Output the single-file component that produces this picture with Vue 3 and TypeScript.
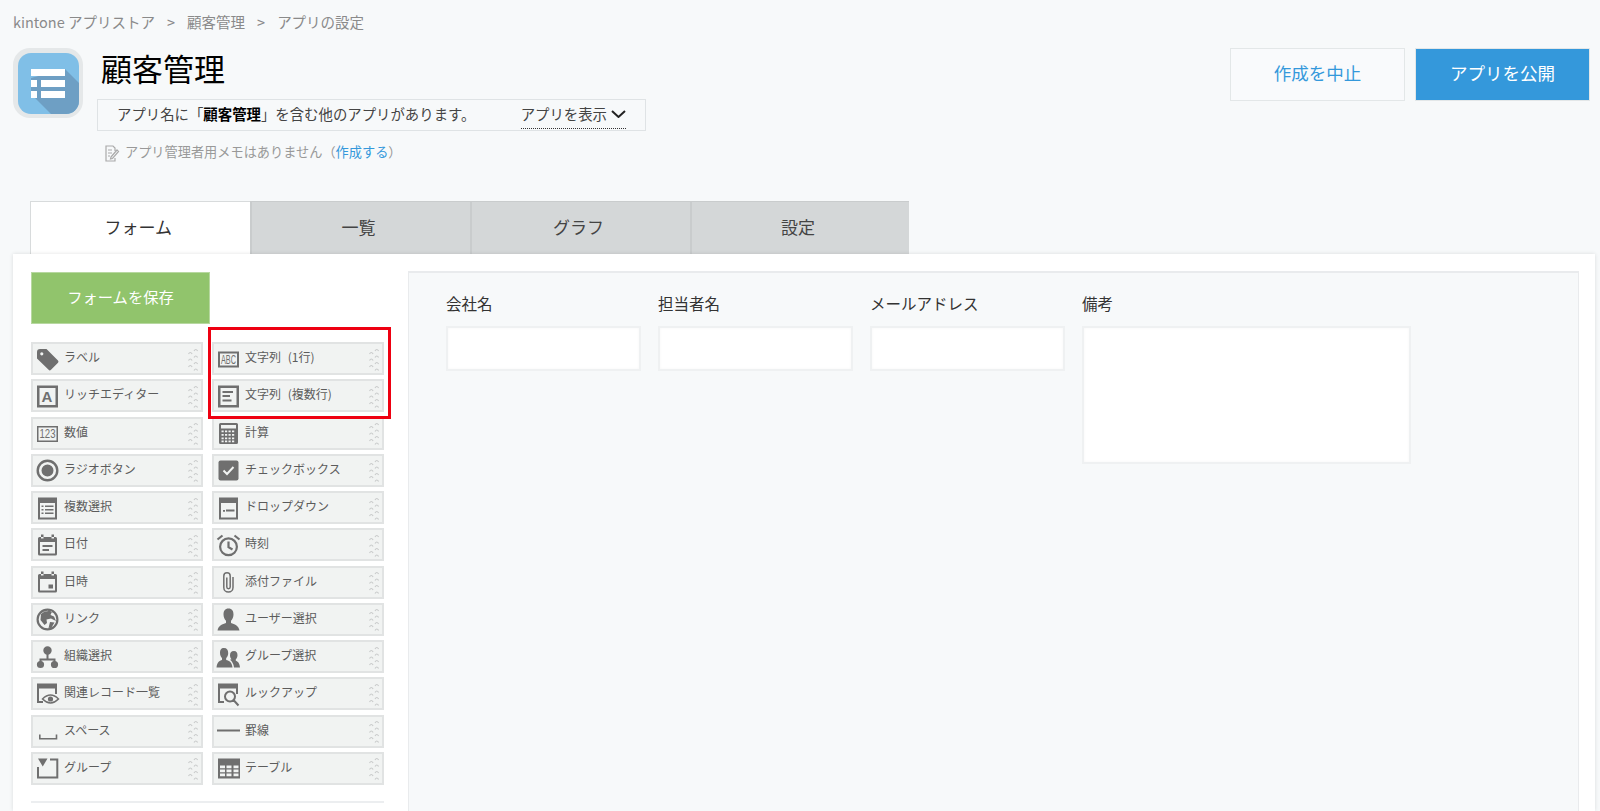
<script setup lang="ts">
interface Icon {
  fill?: string
  stroke?: string
  sw?: number
  light?: string
  text?: string
  tx?: number
  ty?: number
  ts?: number
  tl?: number
  bold?: boolean
}
interface Item {
  label: string
  icon: Icon
}

const circle = (cx: number, cy: number, r: number): string =>
  `M${cx - r} ${cy}a${r} ${r} 0 1 0 ${2 * r} 0a${r} ${r} 0 1 0 ${-2 * r} 0z`
const rect = (x: number, y: number, w: number, h: number): string => `M${x} ${y}h${w}v${h}h${-w}z`

const calendar = rect(6, 1.5, 2.5, 4) + rect(16.5, 1.5, 2.5, 4) + 'M4.5 4H20.5Q22 4 22 5.5V21Q22 22.5 20.5 22.5H4.5Q3 22.5 3 21V5.5Q3 4 4.5 4z' + rect(5, 9, 15, 11.5)

const windowFrame = 'M2 1.5H22V12H20V6.5H4V19H8V21H2z'

const items: Item[] = [
  { label: 'ラベル', icon: { fill: 'M5 2H11.5L23 13.5Q24 14.7 23 15.8L16 22.8Q14.8 24 13.6 22.8L2 11.5V5Q2 2 5 2z' + circle(6.8, 6.8, 1.6) } },
  { label: '文字列 (1行)', icon: { fill: rect(2, 4.5, 21, 16) + rect(4, 6.5, 17, 12), text: 'ABC', tx: 12.5, ty: 17, ts: 12, tl: 15, bold: false } },
  { label: 'リッチエディター', icon: { fill: rect(2, 1.5, 21, 22) + rect(4.5, 4, 16, 17), text: 'A', tx: 12, ty: 18, ts: 15, bold: true } },
  { label: '文字列 (複数行)', icon: { fill: rect(2, 1.5, 21, 22) + rect(4.5, 4, 16, 17) + rect(6.5, 7, 10.5, 2) + rect(6.5, 11, 7.5, 2) + rect(6.5, 15.5, 9, 2) } },
  { label: '数値', icon: { fill: rect(2, 5, 21, 16) + rect(3.5, 6.5, 18, 13), text: '123', tx: 12.5, ty: 17.4, ts: 12, tl: 16 } },
  { label: '計算', icon: { fill: 'M4.5 2H20.5Q22 2 22 3.5V21.5Q22 23 20.5 23H4.5Q3 23 3 21.5V3.5Q3 2 4.5 2z' + rect(5, 4, 15, 3.5) + [9.5, 13, 16.5, 19.5].flatMap(y => [5.5, 9, 12.5, 16].map(x => rect(x, y, 2.2, 1.8))).join('') } },
  { label: 'ラジオボタン', icon: { fill: circle(12.5, 12.5, 11) + circle(12.5, 12.5, 8.6) + circle(12.5, 12.5, 6) } },
  { label: 'チェックボックス', icon: { fill: 'M4.5 2.5H20.5Q22.5 2.5 22.5 4.5V20.5Q22.5 22.5 20.5 22.5H4.5Q2.5 22.5 2.5 20.5V4.5Q2.5 2.5 4.5 2.5z', light: 'M7.5 12.5l3.5 3.5 6.5-7' } },
  { label: '複数選択', icon: { fill: rect(3, 1.5, 19, 22) + rect(5, 7, 15, 14.5) + rect(6.5, 9.5, 2, 1.5) + rect(10, 9.5, 8.5, 1.5) + rect(6.5, 13, 2, 1.5) + rect(10, 13, 8.5, 1.5) + rect(6.5, 16.5, 2, 1.5) + rect(10, 16.5, 8.5, 1.5) } },
  { label: 'ドロップダウン', icon: { fill: rect(3, 1.5, 19, 22) + rect(5, 7, 15, 14.5) + rect(7, 14, 2, 1.8) + rect(10, 13.5, 8.5, 2) } },
  { label: '日付', icon: { fill: calendar + rect(7.5, 12, 10, 2) + rect(7.5, 16, 6.5, 2) } },
  { label: '時刻', icon: { fill: circle(12.5, 13.8, 9.5) + circle(12.5, 13.8, 7.3), stroke: 'M12.5 8.5V14.2L16.5 16.5M1.5 6.5L6.5 2.5M18.5 2.5L23.5 6.5', sw: 2.2 } },
  { label: '日時', icon: { fill: calendar + rect(13.5, 14.5, 4.5, 4) } },
  { label: '添付ファイル', icon: { stroke: 'M17 7V17.5a4.6 4.6 0 0 1-9.2 0V6a3.2 3.2 0 0 1 6.4 0V17a1.7 1.7 0 0 1-3.4 0V7.5', sw: 1.5 } },
  { label: 'リンク', icon: { fill: circle(12.5, 12.5, 11) + circle(12.5, 12.5, 8.8) + 'M6 7Q10 3 17 4.500L15.500 8L19 9.500L21 14L16 11.500L11.500 12.500L12 16L9.500 18L5.500 13zM15 15L19.500 15.500L16.500 20.500L13.500 21z' } },
  { label: 'ユーザー選択', icon: { fill: 'M12.5 1.500c3.500 0 5 2.500 5 6 0 3-1.300 5-2.500 6.300v2.200c3.500 1 7.500 2.500 8.500 7.500H1.500c1-5 5-6.500 8.500-7.500v-2.200C8.800 12.500 7.500 10.500 7.500 7.500c0-3.500 1.500-6 5-6z' } },
  { label: '組織選択', icon: { fill: circle(12.5, 5.5, 4.2) + circle(5.5, 19.5, 3.6) + circle(19.5, 19.5, 3.6), stroke: 'M12.5 9V14.500M5.500 18V14.500H19.500V18', sw: 2 } },
  { label: 'グループ選択', icon: { fill: 'M8 3c3 0 4.200 2 4.200 5 0 2.400-1 4-2 5v2c3 .8 5.800 2.300 6.300 7.500H.5C1 17.300 3.500 15.800 6 15v-2c-1-1-2-2.600-2-5 0-3 1-5 4-5zM18 6c2.500 0 3.500 1.800 3.500 4.200 0 2-1 3.300-1.700 4.100v1.500c2 .6 3.700 2 4.200 6.700H18c-.3-3.500-2-6.300-4-7.800.5-.2 1-.3 1.500-.4v-.1c-.7-.8-1.500-2-1.500-4 0-2.400 1-4.200 4-4.200z' } },
  { label: '関連レコード一覧', icon: { fill: windowFrame + circle(15.5, 17, 2.6), stroke: 'M7.500 17Q15.500 9 23.500 17Q15.500 25 7.500 17z', sw: 1.5 } },
  { label: 'ルックアップ', icon: { fill: windowFrame, stroke: circle(14, 14.5, 5) + 'M17.500 18L22.500 23.500', sw: 2 } },
  { label: 'スペース', icon: { stroke: 'M4.800 15.500V19.800H21.500V15.500', sw: 1.6 } },
  { label: '罫線', icon: { stroke: 'M1 11.500H24', sw: 2 } },
  { label: 'グループ', icon: { fill: 'M3 2.500H12.500L7.750 10.500z', stroke: 'M15 3.500H22.300V21.500H3V11', sw: 2 } },
  { label: 'テーブル', icon: { fill: rect(2, 2.5, 22, 20) + [9.5, 13.5, 17.5].flatMap(y => [4, 10.5, 17.5].map(x => rect(x, y, 5, 2.8))).join('') } },
]

const gripPath = [
  ...[0, 1, 2].map(r => `M0.500 ${7 + r * 6.5}q1.800-3 3.600 0`),
  ...[0, 1, 2, 3].map(r => `M6 ${4 + r * 6.5}q1.800-3 3.600 0`),
].join('')

const tabs = ['フォーム', '一覧', 'グラフ', '設定']
const fields = [
  { label: '会社名', wide: false },
  { label: '担当者名', wide: false },
  { label: 'メールアドレス', wide: false },
  { label: '備考', wide: true },
]
</script>

<template>
  <div class="page">
    <nav class="crumbs">
      <span>kintone アプリストア</span><span class="sep">&gt;</span><span>顧客管理</span><span class="sep">&gt;</span><span>アプリの設定</span>
    </nav>

    <header class="header">
      <svg class="app-icon" viewBox="0 0 70 70" width="70" height="70">
        <defs>
          <clipPath id="inner"><rect x="5" y="5" width="61" height="61" rx="13" /></clipPath>
        </defs>
        <rect width="70" height="70" rx="17" fill="#e5e8e9" />
        <rect x="5" y="5" width="61" height="61" rx="13" fill="#80bfe7" />
        <path d="M52 21L70 39V70H42L18 46V30z" fill="#6e9fc4" clip-path="url(#inner)" />
        <path d="M18 21h34v7H18zM18 32h6v7h-6zM28 32h24v7H28zM18 43h6v7h-6zM28 43h24v7H28z" fill="#fff" />
      </svg>

      <div class="info">
        <h1 class="title">顧客管理</h1>
        <div class="notice">
          <span class="notice-text">アプリ名に「<b>顧客管理</b>」を含む他のアプリがあります。</span>
          <span class="show">アプリを表示
            <svg width="15" height="8" viewBox="0 0 15 8"><path d="M1 1l6.500 6L14 1" fill="none" stroke="#222" stroke-width="2" /></svg>
          </span>
        </div>
        <div class="memo">
          <svg width="15" height="17" viewBox="0 0 15 17" fill="none" stroke="#aaa" stroke-width="1.200">
            <path d="M10 6V3L8 1H1V16H10V13M3 5h4M3 8h4M3 11h2M6 12l6-7 1.500 1.500-6 7-2 .5z" />
          </svg>
          <span class="memo-text">アプリ管理者用メモはありません（<a class="link">作成する</a>）</span>
        </div>
      </div>

      <div class="actions">
        <button class="btn cancel">作成を中止</button>
        <button class="btn publish">アプリを公開</button>
      </div>
    </header>

    <div class="tabs">
      <div v-for="(tab, i) in tabs" :key="tab" class="tab" :class="{ active: i === 0 }">{{ tab }}</div>
    </div>

    <main class="panel">
      <aside class="side">
        <button class="save">フォームを保存</button>
        <div class="palette">
          <div v-for="item in items" :key="item.label" class="item">
            <svg class="icon" viewBox="0 0 24 24" width="24" height="24">
              <path v-if="item.icon.fill" :d="item.icon.fill" fill="#6f6f6f" fill-rule="evenodd" />
              <path v-if="item.icon.stroke" :d="item.icon.stroke" fill="none" stroke="#6f6f6f" :stroke-width="item.icon.sw" />
              <path v-if="item.icon.light" :d="item.icon.light" fill="none" stroke="#f1f3f2" :stroke-width="item.icon.sw ?? 2" />
              <text
                v-if="item.icon.text"
                class="icon-text"
                :x="item.icon.tx"
                :y="item.icon.ty"
                :font-size="item.icon.ts"
                :font-weight="item.icon.bold ? 700 : 400"
                :textLength="item.icon.tl"
                lengthAdjust="spacingAndGlyphs"
                text-anchor="middle"
              >{{ item.icon.text }}</text>
            </svg>
            <span class="item-label">{{ item.label }}</span>
            <svg class="grip" viewBox="0 0 10 24" width="10" height="24">
              <path :d="gripPath" fill="none" stroke="#c9cbcb" stroke-width="1.2" />
            </svg>
          </div>
          <div class="highlight"></div>
        </div>
        <hr class="rule" />
      </aside>

      <section class="form">
        <div v-for="f in fields" :key="f.label" class="field" :class="{ wide: f.wide }">
          <label class="field-label">{{ f.label }}</label>
          <div class="control"></div>
        </div>
      </section>
    </main>
  </div>
</template>

<style>
html, body { margin: 0; background: #f7f9fa; }
</style>

<style scoped>
.page {
  height: 811px;
  overflow: hidden;
  display: flex;
  flex-direction: column;
  background: #f7f9fa;
  font-family: "Noto Sans CJK JP", "Noto Sans", sans-serif;
  color: #333;
}
.crumbs {
  height: 48px;
  box-sizing: border-box;
  padding: 11px 0 0 13px;
  font-size: 14.5px;
  line-height: 22px;
  color: #8a8a8a;
  flex: none;
}
.sep { margin: 0 12px; }
.header {
  height: 153px;
  flex: none;
  display: flex;
  align-items: flex-start;
  padding: 0 10px 0 13px;
}
.app-icon { flex: none; }
.info { margin-left: 14px; }
.title {
  margin: 0 0 11px 4px;
  font-size: 31px;
  line-height: 40px;
  font-weight: 400;
  color: #000;
}
.notice {
  width: 549px;
  height: 32px;
  box-sizing: border-box;
  border: 1px solid #dfe3e5;
  padding: 0 19px;
  display: flex;
  align-items: center;
  justify-content: space-between;
  font-size: 14.4px;
  color: #444;
}
.notice-text { margin-bottom: 4px; }
.notice b { color: #000; font-weight: 700; }
.show {
  display: flex;
  align-items: center;
  gap: 4px;
  line-height: 20px;
  border-bottom: 1px dotted #333;
  height: 26px;
  box-sizing: border-box;
  margin-top: 2px;
  padding-bottom: 4px;
}
.memo {
  margin: 12px 0 0 8px;
  height: 20px;
  display: flex;
  align-items: center;
  gap: 5px;
  font-size: 13.2px;
  color: #999;
}
.memo-text { margin-bottom: 4px; }
.link { color: #3498db; }
.actions { margin-left: auto; display: flex; gap: 10px; }
.btn {
  width: 175px;
  height: 53px;
  font: inherit;
  font-size: 17.5px;
  padding: 0 0 4px;
  cursor: pointer;
}
.cancel { background: #f9fafc; border: 1px solid #e3e7e8; color: #3498db; }
.publish { background: #3498db; border: 1px solid #e3e7e8; color: #fff; }
.tabs {
  flex: none;
  display: flex;
  margin-left: 30px;
  height: 53px;
}
.tab {
  width: 220px;
  box-sizing: border-box;
  background: #d4d7d8;
  border-top: 1px solid #c9cccd;
  border-left: 2px solid #c9cccd;
  display: flex;
  align-items: center;
  justify-content: center;
  font-size: 17px;
  color: #444;
  padding: 0 4px 4px 0;
}
.tab.active {
  width: 219.5px;
  background: #fff;
  border-top-color: #d8dbdc;
  border-left: 1px solid #d8dbdc;
  color: #333;
}
.tab:last-child { width: 219px; }
.panel {
  flex: 1;
  min-height: 0;
  margin: 0 5px 0 13px;
  padding: 18px 16px 0 18px;
  background: #fff;
  box-shadow: 0 0 4px rgba(0, 0, 0, 0.12);
  display: flex;
  align-items: flex-start;
  position: relative;
}
.side { width: 353px; flex: none; }
.save {
  display: block;
  width: 179px;
  height: 52px;
  background: #91c46c;
  border: 1px solid #b7d8a0;
  color: #fff;
  font: inherit;
  font-size: 15.3px;
  padding: 0 0 4px;
  cursor: pointer;
}
.palette {
  position: relative;
  margin-top: 18px;
  display: grid;
  grid-template-columns: 172px 172px;
  column-gap: 9px;
  grid-auto-rows: 33px;
  row-gap: 4.25px;
}
.item {
  box-sizing: border-box;
  background: #f1f3f2;
  border: 2px solid #e1e3e3;
  display: flex;
  align-items: center;
  padding: 0 3px 0 2px;
  font-size: 12px;
  color: #5c5c5c;
}
.icon { flex: none; overflow: visible; }
.icon-text { font-family: "Liberation Sans", sans-serif; fill: #6f6f6f; }
.item-label { margin: 0 0 4px 5px; white-space: nowrap; word-spacing: 4px; }
.grip { flex: none; margin-left: auto; }
.highlight {
  position: absolute;
  left: 177px;
  top: -15px;
  width: 183px;
  height: 92px;
  box-sizing: border-box;
  border: 3px solid #ee0011;
}
.rule {
  margin: 16px 0 0;
  border: 0;
  border-top: 2px solid #eceef0;
}
.form {
  flex: 1;
  align-self: stretch;
  margin: -1px 0 0 24px;
  border: 1px solid #e9ebed;
  border-top-width: 2px;
  border-bottom: 0;
  background: #f7f9fa;
  padding: 20px 0 0 37px;
  display: flex;
  align-items: flex-start;
  gap: 17px;
}
.field { width: 195px; }
.field.wide { width: 329px; }
.field-label {
  display: block;
  font-size: 15.5px;
  line-height: 20px;
  color: #333;
  margin-bottom: 13px;
}
.control {
  height: 45px;
  box-sizing: border-box;
  background: #fff;
  border: 2px solid #eff1f2;
  box-shadow: inset 0 0 3px rgba(0, 0, 0, 0.04);
}
.wide .control { height: 138px; }
</style>
